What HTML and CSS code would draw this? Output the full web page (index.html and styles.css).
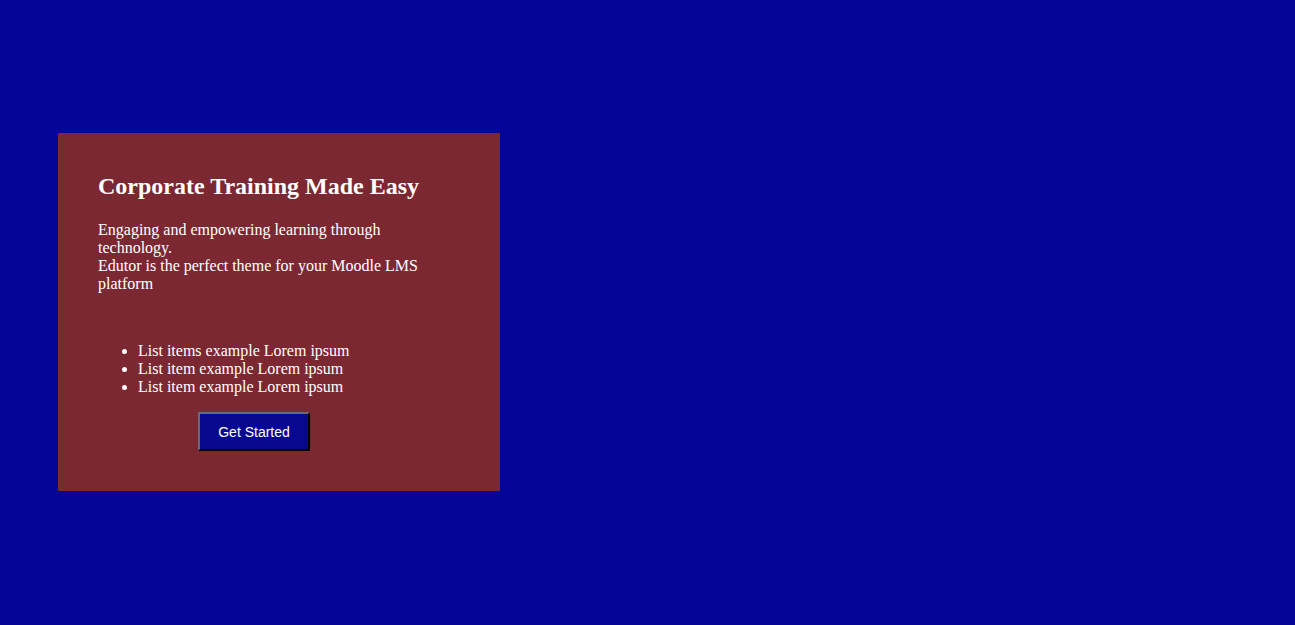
FILE: index.html
```html
<!DOCTYPE html>
<html>
<head>
<meta charset="utf-8">
<link rel="stylesheet" href="styles.css">
</head>
<body>
<main class="page">
  <section class="card">
    <h2 class="title">Corporate Training Made Easy</h2>
    <p class="lead">Engaging and empowering learning through technology.<br>Edutor is the perfect theme for your Moodle LMS platform</p>
    <ul class="list">
      <li>List items example Lorem ipsum</li>
      <li>List item example Lorem ipsum</li>
      <li>List item example Lorem ipsum</li>
    </ul>
    <button class="cta">Get Started</button>
  </section>
</main>
</body>
</html>
```
FILE: styles.css
```css
html, body {
  margin: 0;
  padding: 0;
  background: #050597;
  height: 100%;
}
body {
  font-family: "Liberation Serif", "Times New Roman", serif;
  color: #ffffff;
}
.page {
  padding: 133px 0 0 58px;
}
.card {
  box-sizing: border-box;
  width: 442px;
  padding: 40px 50px 40px 40px;
  background: #7b2833;
}
.title {
  margin: 0 0 21px;
  font-size: 24px;
  line-height: 27px;
  font-weight: bold;
}
.lead {
  margin: 0;
  font-size: 16px;
  line-height: 18px;
}
.list {
  margin: 49px 0 16px;
  padding-left: 40px;
  font-size: 16px;
  line-height: 18px;
}
.cta {
  display: block;
  margin-left: 100px;
  width: 112px;
  height: 39px;
  padding: 0;
  background: #07078f;
  color: #ffffff;
  font-family: "Liberation Sans", Arial, sans-serif;
  font-size: 14px;
  border: 2px solid;
  border-color: #6b6b6b #000000 #000000 #6b6b6b;
}
```
